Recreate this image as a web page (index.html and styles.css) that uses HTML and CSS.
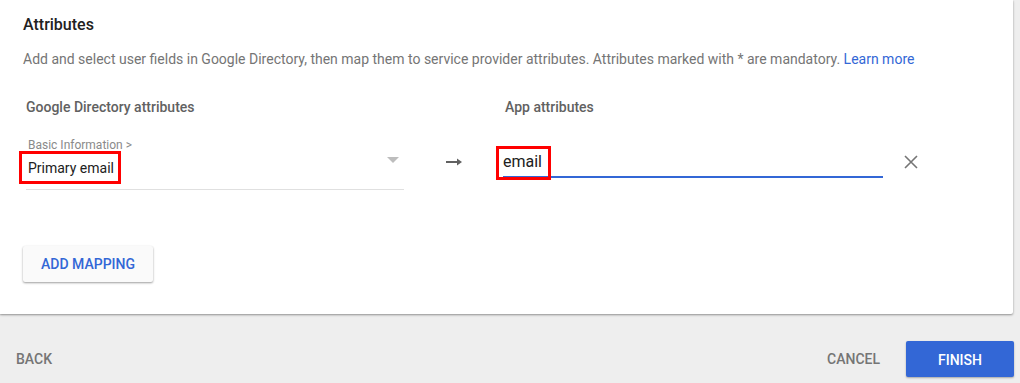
FILE: index.html
```html
<!DOCTYPE html>
<html lang="en">
<head>
    <meta charset="UTF-8">
    <meta name="viewport" content="width=device-width, initial-scale=1.0">
    <title>Attributes</title>
    <link rel="stylesheet" href="styles.css">
</head>
<body>
    <div class="card">
        <h2 class="title">Attributes</h2>
        <p class="desc">Add and select user fields in Google Directory, then map them to service provider attributes. Attributes marked with * are mandatory. <a href="#">Learn more</a></p>

        <div class="mapping">
            <div class="col-head">Google Directory attributes</div>
            <div></div>
            <div class="col-head">App attributes</div>
            <div></div>

            <!-- mapping row -->
            <div class="select">
                <div class="select-label">Basic Information &gt;</div>
                <div class="select-row">
                    <span class="mark mark-left">Primary email</span>
                    <span class="caret"></span>
                </div>
            </div>
            <div class="arrow">
                <svg width="16" height="8" viewBox="0 0 16 8"><path d="M0 4h12" stroke="#616161" stroke-width="2"/><path d="M11 0.5L16 4L11 7.5Z" fill="#616161"/></svg>
            </div>
            <div class="text-field">
                <span class="mark mark-right">email</span>
            </div>
            <div class="remove">
                <svg width="14" height="14" viewBox="0 0 14 14"><path d="M1 1L13 13M13 1L1 13" stroke="#757575" stroke-width="1.6"/></svg>
            </div>
        </div>

        <button class="btn-raised">ADD MAPPING</button>
    </div>

    <div class="footer">
        <button class="btn-flat">BACK</button>
        <div class="footer-right">
            <button class="btn-flat">CANCEL</button>
            <button class="btn-primary">FINISH</button>
        </div>
    </div>
</body>
</html>
```

FILE: styles.css
```css
body {
    margin: 0;
    padding: 0;
    background-color: #eeeeee;
    font-family: Roboto, "Liberation Sans", Arial, sans-serif;
    font-size: 14px;
    color: #212121;
}
.card {
    background-color: #fff;
    margin-right: 7px;
    padding: 13px 0 32px 23px;
    border-bottom-right-radius: 2px;
    box-shadow: 0 1px 2px rgba(0, 0, 0, 0.3), 0 1px 3px rgba(0, 0, 0, 0.12);
}
.title {
    margin: 0;
    font-size: 16px;
    font-weight: 500;
    line-height: 24px;
    color: #212121;
}
.desc {
    margin: 12px 0 0;
    line-height: 20px;
    color: #757575;
}
.desc a {
    color: #3367d6;
    text-decoration: none;
}
.mapping {
    display: grid;
    grid-template-columns: 378px 99px 380px 56px;
    row-gap: 20px;
    margin: 28px 0 0 3px;
    align-items: start;
}
.col-head {
    font-weight: 500;
    line-height: 20px;
    color: #616161;
}
.col-head + div + .col-head {
    padding-left: 2px;
}
.select {
    padding: 0 5px 11px 2px;
    border-bottom: 1px solid #e0e0e0;
}
.select-label {
    font-size: 12px;
    line-height: 16px;
    color: #8a8a8a;
}
.select-row {
    display: flex;
    justify-content: space-between;
    align-items: flex-start;
    margin-top: 5px;
    line-height: 20px;
}
.caret {
    width: 0;
    height: 0;
    margin-top: -1px;
    border-left: 6px solid transparent;
    border-right: 6px solid transparent;
    border-top: 6px solid #bdbdbd;
}
.arrow {
    display: flex;
    justify-content: center;
    margin-top: 21px;
}
.arrow svg, .remove svg {
    display: block;
}
.text-field {
    margin-top: 15px;
    padding-bottom: 4px;
    font-size: 16px;
    line-height: 20px;
    border-bottom: 2px solid #3367d6;
}
.remove {
    display: flex;
    justify-content: center;
    margin-top: 18px;
}
/* red annotation boxes */
.mark {
    position: relative;
}
.mark::after {
    content: "";
    position: absolute;
    border: 3px solid #f00;
}
.mark-left::after {
    top: -7px;
    bottom: -6px;
    left: -9px;
    right: -7px;
}
.mark-right::after {
    top: -6px;
    bottom: -9px;
    left: -7px;
    right: -9px;
}
button {
    font-family: inherit;
    font-size: 14px;
    font-weight: 500;
    line-height: 36px;
    height: 36px;
    border: none;
    cursor: pointer;
}
.btn-raised {
    display: block;
    margin-top: 56px;
    padding: 0 18px;
    width: 130px;
    background-color: #fafafa;
    color: #3367d6;
    border-radius: 2px;
    box-shadow: 0 1px 2px rgba(0, 0, 0, 0.3), 0 1px 3px rgba(0, 0, 0, 0.1);
}
.footer {
    display: flex;
    justify-content: space-between;
    align-items: center;
    padding: 27px 6px 6px 0;
}
.footer-right {
    display: flex;
    align-items: center;
}
.btn-flat {
    background: none;
    padding: 0 16px;
    color: #757575;
}
.footer-right .btn-flat {
    margin-right: 10px;
}
.btn-primary {
    width: 108px;
    background-color: #3367d6;
    color: #fff;
    border-radius: 2px;
    box-shadow: 0 1px 2px rgba(0, 0, 0, 0.3);
}
```
